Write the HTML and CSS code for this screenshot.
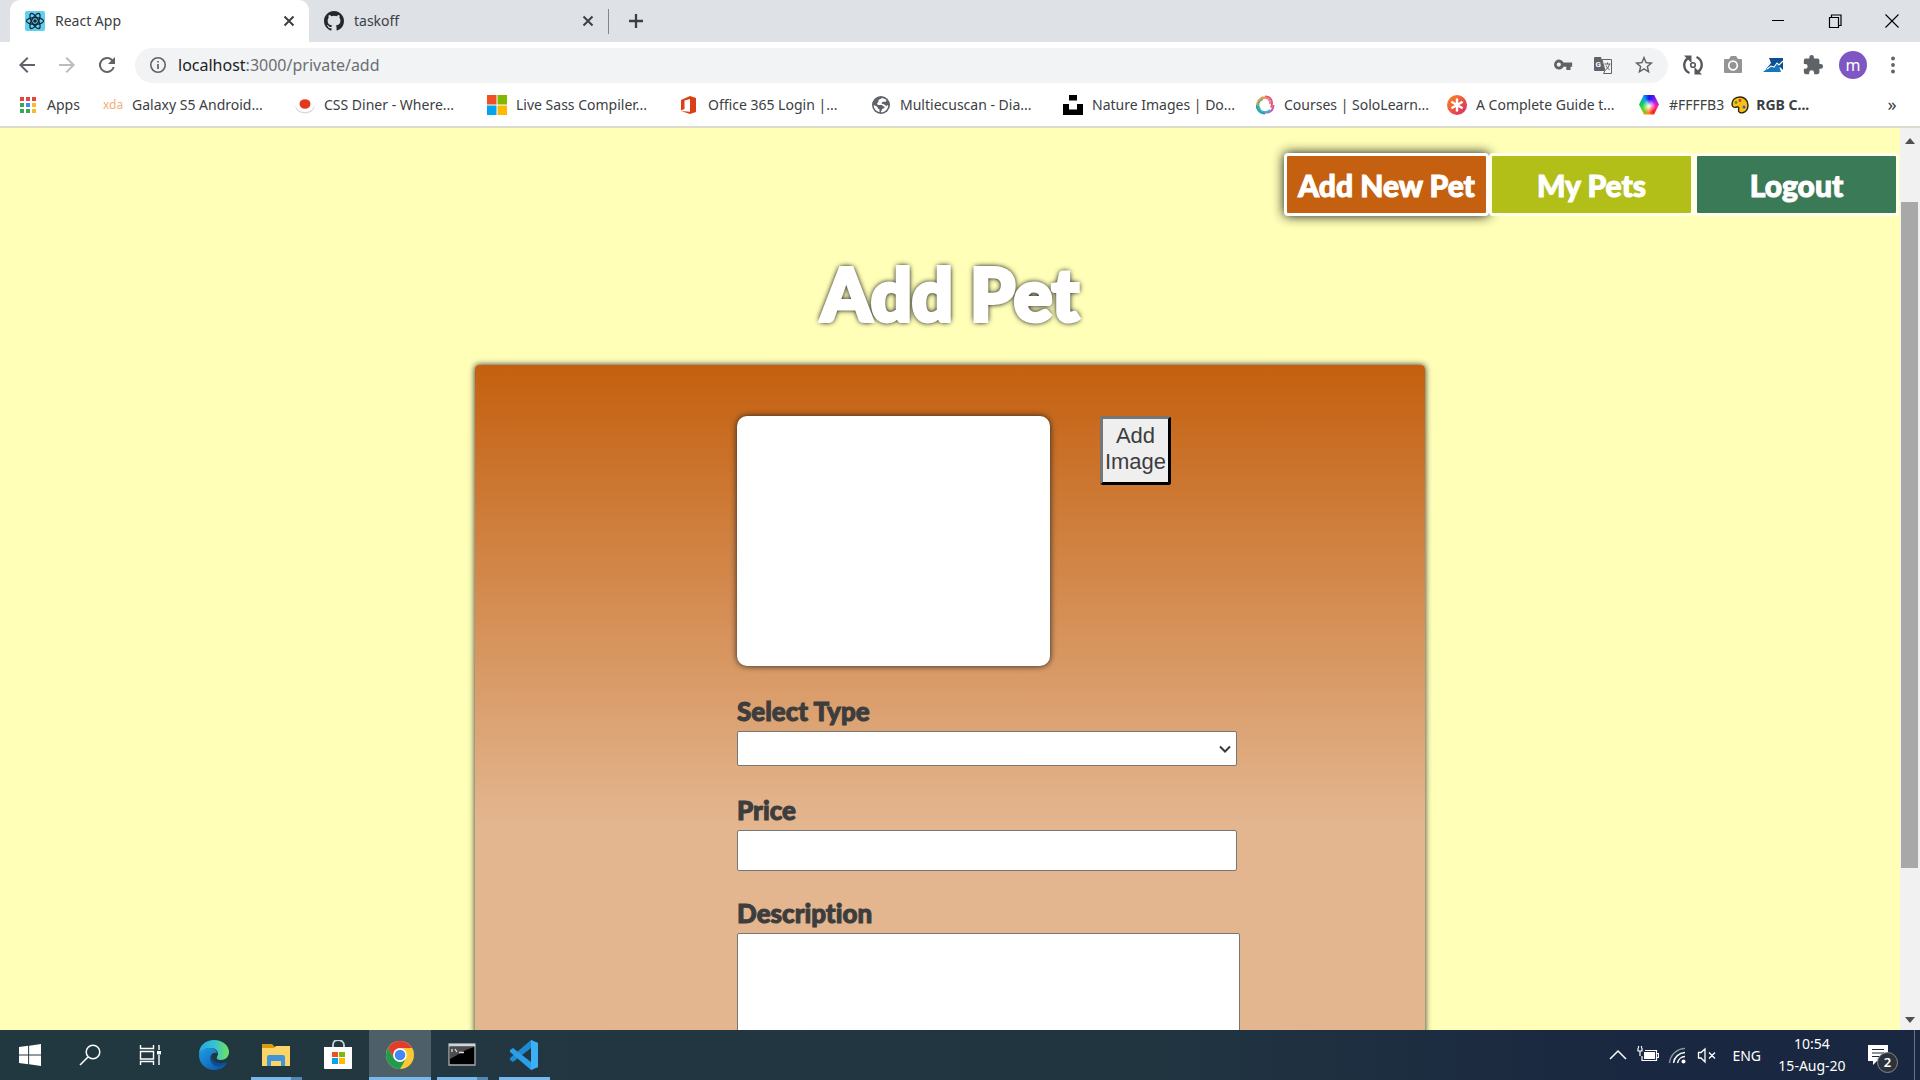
FILE: index.html
```html
<!DOCTYPE html>
<html lang="en">
<head>
<meta charset="utf-8">
<title>React App</title>
<link rel="stylesheet" href="styles.css">
</head>
<body>
<header class="browser">
  <div class="tabstrip">
    <div class="tab tab-active">
      <svg class="i20" viewBox="0 0 20 20"><rect width="20" height="20" rx="2" fill="#61d0ee"/><g fill="none" stroke="#123" stroke-width="1.2"><ellipse cx="10" cy="10" rx="8.5" ry="3.3"/><ellipse cx="10" cy="10" rx="8.5" ry="3.3" transform="rotate(60 10 10)"/><ellipse cx="10" cy="10" rx="8.5" ry="3.3" transform="rotate(120 10 10)"/></g><circle cx="10" cy="10" r="1.8" fill="#123"/></svg>
      <span class="tab-title">React App</span>
      <button class="plain" aria-label="Close tab"><svg class="i12" viewBox="0 0 12 12"><path d="M1.500 1.500l9 9M10.500 1.500l-9 9" stroke="#3c4043" stroke-width="2"/></svg></button>
    </div>
    <div class="tab">
      <svg class="i20" viewBox="0 0 16 16"><path fill="#24292e" d="M8 0C3.580 0 0 3.580 0 8c0 3.540 2.290 6.530 5.470 7.590.4.070.55-.17.55-.38v-1.490c-2.010.37-2.530-.49-2.690-.94-.09-.23-.48-.94-.82-1.130-.28-.15-.68-.52-.01-.53.63-.01 1.080.58 1.230.82.72 1.210 1.870.87 2.330.66.07-.52.28-.87.51-1.070-1.780-.2-3.640-.89-3.640-3.950 0-.87.31-1.590.82-2.150-.08-.2-.36-1.020.08-2.120 0 0 .67-.21 2.200.82a7.600 7.600 0 014 0c1.530-1.040 2.200-.82 2.200-.82.44 1.100.16 1.920.08 2.120.51.56.82 1.270.82 2.150 0 3.070-1.870 3.750-3.650 3.950.29.25.54.73.54 1.480v2.200c0 .21.15.46.55.38A8 8 0 0016 8c0-4.420-3.580-8-8-8z"/></svg>
      <span class="tab-title">taskoff</span>
      <button class="plain" aria-label="Close tab"><svg class="i12" viewBox="0 0 12 12"><path d="M1.500 1.500l9 9M10.500 1.500l-9 9" stroke="#3c4043" stroke-width="2"/></svg></button>
    </div>
    <span class="tab-divider"></span>
    <button class="plain new-tab" aria-label="New tab"><svg class="i16" viewBox="0 0 16 16"><path d="M8 1v14M1 8h14" stroke="#3c4043" stroke-width="2.300"/></svg></button>
    <div class="window-controls">
      <button class="plain" aria-label="Minimize"><svg class="i14" viewBox="0 0 14 14"><path d="M1 6.500h12" stroke="#000"/></svg></button>
      <button class="plain" aria-label="Restore"><svg class="i14" viewBox="0 0 14 14"><path d="M1.500 3.500h9v10h-9zM3.500 3V1h9.500v10.500h-2" fill="none" stroke="#000" stroke-width="1.200"/></svg></button>
      <button class="plain" aria-label="Close"><svg class="i14" viewBox="0 0 14 14"><path d="M.5.5l13 13M13.500.5l-13 13" stroke="#000" stroke-width="1.100"/></svg></button>
    </div>
  </div>
  <div class="toolbar">
    <div class="nav-icons">
      <button class="plain" aria-label="Back"><svg class="i24" viewBox="0 0 24 24"><path fill="#5f6368" d="M20 11H7.800l5.600-5.600L12 4l-8 8 8 8 1.400-1.400L7.800 13H20z"/></svg></button>
      <button class="plain" aria-label="Forward"><svg class="i24" viewBox="0 0 24 24"><path fill="#babcbe" d="M4 11h12.200l-5.600-5.600L12 4l8 8-8 8-1.400-1.400 5.600-5.600H4z"/></svg></button>
      <button class="plain" aria-label="Reload"><svg class="i24" viewBox="0 0 24 24"><path fill="#5f6368" d="M17.650 6.350A8 8 0 1 0 19.730 14h-2.080A6 6 0 1 1 12 6c1.660 0 3.140.69 4.220 1.780L13 11h7V4z"/></svg></button>
    </div>
    <label class="omnibox">
      <svg class="i20" viewBox="0 0 20 20"><circle cx="10" cy="10" r="7.200" fill="none" stroke="#5f6368" stroke-width="1.600"/><path d="M10 9v5M10 6v1.600" stroke="#5f6368" stroke-width="1.700"/></svg>
      <span class="url"><b>localhost</b>:3000/private/add</span>
      <svg class="i20" viewBox="0 0 24 24"><path fill="#5f6368" d="M12.650 9A6 6 0 1 0 12.650 14H16v4h5v-4h2V9zM7 14a2.500 2.500 0 1 1 0-5 2.500 2.500 0 0 1 0 5z"/></svg>
      <svg class="i20" viewBox="0 0 20 20"><path d="M2 2h6l4 14H2a1 1 0 0 1-1-1V3a1 1 0 0 1 1-1z" fill="#5f6368"/><path d="M9 4.500h9.500v14h-8l1.500-3z" fill="#f1f3f4" stroke="#5f6368"/><path d="M11.500 9h6M14.500 7.500V9m2 0c-.5 2.500-2 4.500-4 6m.5-4.500c1 2 2 3 3.500 4.500" stroke="#5f6368" fill="none"/><text x="2.500" y="11.500" font-size="8" font-weight="700" fill="#fff" font-family="Roboto, sans-serif">G</text></svg>
      <svg class="i22" viewBox="0 0 24 24"><path fill="#5f6368" d="M22 9.240l-7.190-.62L12 2 9.190 8.630 2 9.240l5.460 4.730L5.820 21 12 17.270 18.180 21l-1.630-7.030zM12 15.400l-3.760 2.270 1-4.280-3.320-2.880 4.380-.38L12 6.100l1.710 4.040 4.380.38-3.320 2.880 1 4.280z"/></svg>
    </label>
    <div class="extensions">
      <svg class="i22" viewBox="0 0 22 22"><g fill="none" stroke="#55585c" stroke-width="2.400"><path d="M7.500 19A8.500 8.500 0 0 1 5.500 4.500"/><path d="M14.500 3a8.500 8.500 0 0 1 2 14.500"/></g><path d="M2 1.500h7.500V9zM20 20.500h-7.500V13z" fill="#55585c"/><circle cx="11" cy="11" r="2.300" fill="none" stroke="#55585c" stroke-width="1.600"/></svg>
      <svg class="i22" viewBox="0 0 22 22"><path fill="#949494" d="M3 5h4l2-3h5l2 3h3a1 1 0 0 1 1 1v12a1 1 0 0 1-1 1H3a1 1 0 0 1-1-1V6a1 1 0 0 1 1-1z"/><circle cx="11" cy="11.500" r="4.300" fill="none" stroke="#fff" stroke-width="1.700"/></svg>
      <svg class="i22" viewBox="0 0 22 22"><path fill="#0b4f8c" d="M7 4h14v12l-3-3-5 3-9-1 5-6z"/><path fill="#1576bd" d="M1 18l5-4 3-2 3 2 3-4 2 2 2 6z"/><path d="M5 15l4-3 3 1 3-4 2 2 4-4" fill="none" stroke="#fff" stroke-width="1.100"/></svg>
      <svg class="i22" viewBox="0 0 24 24"><path fill="#5f6368" d="M20.500 11H19V7a2 2 0 0 0-2-2h-4V3.500a2.500 2.500 0 0 0-5 0V5H4a2 2 0 0 0-2 2v3.800h1.500a2.700 2.700 0 0 1 0 5.400H2V20a2 2 0 0 0 2 2h3.800v-1.500a2.700 2.700 0 0 1 5.400 0V22H17a2 2 0 0 0 2-2v-4h1.500a2.500 2.500 0 0 0 0-5z"/></svg>
      <button class="plain avatar">m</button>
      <svg class="i22" viewBox="0 0 22 22"><g fill="#5f6368"><circle cx="11" cy="4.500" r="1.900"/><circle cx="11" cy="11" r="1.900"/><circle cx="11" cy="17.500" r="1.900"/></g></svg>
    </div>
  </div>
  <nav class="bookmarks">
    <a href="#" class="bm-apps"><svg class="i20" viewBox="0 0 20 20"><path fill="#e8453c" d="M2 2h4v4H2zM8 2h4v4H8zM14 2h4v4h-4z"/><path fill="#3aa757" d="M2 8h4v4H2zM2 14h4v4H2z"/><path fill="#4688f1" d="M8 8h4v4H8z"/><path fill="#f9bb2d" d="M14 8h4v4h-4zM14 14h4v4h-4z"/><path fill="#3aa757" d="M8 14h4v4H8z"/></svg>Apps</a>
    <a href="#"><span class="xda">xda</span>Galaxy S5 Android...</a>
    <a href="#"><svg class="i20" viewBox="0 0 20 20"><ellipse cx="10" cy="12" rx="9.500" ry="6.500" fill="#dcdcdc"/><ellipse cx="10" cy="10.500" rx="9" ry="6.500" fill="#fff"/><ellipse cx="10" cy="9" rx="5.500" ry="4.800" fill="#e03a1c"/></svg>CSS Diner - Where...</a>
    <a href="#"><svg class="i20" viewBox="0 0 20 20"><path fill="#f25022" d="M0 0h9.500v9.500H0z"/><path fill="#7fba00" d="M10.500 0H20v9.500h-9.500z"/><path fill="#00a4ef" d="M0 10.500h9.500V20H0z"/><path fill="#ffb900" d="M10.500 10.500H20V20h-9.500z"/></svg>Live Sass Compiler...</a>
    <a href="#"><svg class="i20" viewBox="0 0 20 20"><path fill="#dc3e15" d="M2 5l9-4 6 2v14l-6 2-9-3 9 .8V4L5.500 5.500v8.500L2 15.500z"/></svg>Office 365 Login |...</a>
    <a href="#"><svg class="i20" viewBox="0 0 20 20"><circle cx="10" cy="10" r="9" fill="#5f6368"/><path fill="#fff" d="M11 3c-1 1-4 1.500-3.500 3S5 8 6.500 9.500s4-.5 5 1 2.500.5 2 2-2 .5-2.500 2S9.500 17 10 17.300c4 0 7-3 7.200-6.800-1-.5-1 .5-2.200.2S13.500 9 12 9s-2-1-.5-2 2.500.5 3.500-.5l.5-1.500C14 4 12.500 3.200 11 3z"/><path fill="#fff" d="M2.700 10l3.300 1.500 1 2 1.500 1V17C5 16.300 2.700 13.500 2.700 10z"/></svg>Multiecuscan - Dia...</a>
    <a href="#"><svg class="i20" viewBox="0 0 20 20"><path d="M6 0h8v5.500H6zM0 9h6v5.500h8V9h6v11H0z"/></svg>Nature Images | Do...</a>
    <a href="#"><svg class="i20" viewBox="0 0 20 20"><g fill="none" stroke-width="1.900"><path d="M10 1.500c5 0 9 4 6 11" stroke="#e8566d"/><path d="M6 3c5-2 10 2 9 6" stroke="#f0839a"/><path d="M18.500 10c0 6-5 9-10 7" stroke="#c95ba0"/><path d="M15 15c-4 4-10 2-11-2" stroke="#3fb0de"/><path d="M10 18.500c-6 0-9-5-8-9" stroke="#2b9fb0"/><path d="M5 14c-3-3-2-9 3-10" stroke="#5cb27c"/><path d="M2 9c1-5 5-7 9-6" stroke="#e69a4c"/></g></svg>Courses | SoloLearn...</a>
    <a href="#"><svg class="i20" viewBox="0 0 20 20"><defs><linearGradient id="ast" x2="1" y2="1"><stop stop-color="#ff8a18"/><stop offset="1" stop-color="#d6246e"/></linearGradient></defs><circle cx="10" cy="10" r="10" fill="url(#ast)"/><path d="M10 3.500v13M4.400 6.800l11.200 6.400M15.600 6.800L4.400 13.200" stroke="#fff" stroke-width="2.400"/></svg>A Complete Guide t...</a>
    <a href="#"><span class="hexagon"></span>#FFFFB3 <svg class="i18" viewBox="0 0 18 18"><path d="M9 1C3 1 1 5 1 8c0 3 2 4 5 3 2-.5 2 1 1.500 3s2 3.500 5 2.500 4.500-4 4.500-7.500C17 4 13 1 9 1z" fill="#fbbf16" stroke="#2b2207" stroke-width="1.400"/><circle cx="5" cy="6.500" r="1.400" fill="#3f9e3f"/><circle cx="9" cy="4.500" r="1.400" fill="#d8342b"/><circle cx="13" cy="11" r="1.500" fill="#3b5fae"/></svg> <b>RGB C...</b></a>
    <button class="plain more" aria-label="More bookmarks">»</button>
  </nav>
</header>

<div class="viewport">
  <main class="page">
    <nav class="site-nav">
      <a href="#" class="nav-link nav-add">Add New Pet</a>
      <a href="#" class="nav-link nav-pets">My Pets</a>
      <a href="#" class="nav-link nav-logout">Logout</a>
    </nav>
    <h1>Add Pet</h1>
    <form class="card">
      <div class="image-row">
        <div class="preview"></div>
        <button type="button" class="add-image">Add Image</button>
      </div>
      <label for="type">Select Type</label>
      <div class="select-wrap">
        <select id="type"><option></option></select>
        <svg class="chevron" viewBox="0 0 12 8"><path d="M1 1.500l5 5 5-5" fill="none" stroke="#3a3a3a" stroke-width="2"/></svg>
      </div>
      <label for="price">Price</label>
      <input id="price" type="text">
      <label for="description">Description</label>
      <textarea id="description"></textarea>
    </form>
  </main>
  <div class="scrollbar">
    <svg viewBox="0 0 10 6"><path d="M0 6l5-6 5 6z" fill="#505050"/></svg>
    <div class="track"><div class="thumb"></div></div>
    <svg viewBox="0 0 10 6"><path d="M0 0l5 6 5-6z" fill="#505050"/></svg>
  </div>
</div>

<footer class="taskbar">
  <button class="plain sys" aria-label="Start"><svg class="i22" viewBox="0 0 20 20"><path fill="#fff" d="M0 2.800l8.300-1.200v7.900H0zM9.200 1.500L20 0v9.500H9.200zM0 10.400h8.300v7.900L0 17.200zM9.200 10.400H20V20L9.200 18.500z"/></svg></button>
  <button class="plain sys" aria-label="Search"><svg class="i22" viewBox="0 0 22 22"><circle cx="14" cy="8" r="6.800" fill="none" stroke="#fff" stroke-width="1.500"/><path d="M9 13l-8 8" stroke="#fff" stroke-width="1.600"/></svg></button>
  <button class="plain sys" aria-label="Task view"><svg class="i22" viewBox="0 0 22 22"><g fill="none" stroke="#fff" stroke-width="1.400"><path d="M1.500 1v3.500h13V1M1.500 21v-3.500h13V21M1.500 7.500h13v7.500h-13zM20 1v5M20 11v10"/></g><path d="M18 7h4v3.500h-4z" fill="#fff"/></svg></button>
  <button class="plain app first-app" aria-label="Edge"><svg class="i30" viewBox="0 0 30 30"><defs><linearGradient id="eg" x2="1"><stop stop-color="#2aa5e0"/><stop offset=".5" stop-color="#35c1d6"/><stop offset="1" stop-color="#6fe45a"/></linearGradient><linearGradient id="eb" x2="1" y2="1"><stop stop-color="#1fa0e4"/><stop offset="1" stop-color="#0c4fa5"/></linearGradient></defs><path fill="url(#eg)" d="M0 14C0 5 7 0 15 0c9 0 15 6 15 12 0 5-4 8-8 8-3 0-5-1-4-3 3-5-1-9-6-9C6 8 2 11 0 14z"/><path fill="url(#eb)" d="M0 15C1 10 6 8 11 8c4 0 7 2 7 5-5-1-7 3-6 7 2 6 9 7 16 3-3 5-8 7-13 7C6 30 0 23 0 15z"/><path fill="#0f4c96" d="M12 15c-3 6 3 14 11 11 2-1 4-2 5-4-7 3-16 0-16-7z"/></svg></button>
  <button class="plain app open grouped" aria-label="File Explorer"><svg class="i28" viewBox="0 0 28 28"><path fill="#d99a12" d="M0 3h10l3 3h2v6H0z"/><path fill="#fbd468" d="M0 7h12l2-2h14v20H0z"/><path fill="#3f95d8" d="M5 25V16a2 2 0 0 1 2-2h14a2 2 0 0 1 2 2v9h-4v-5H9v5z"/></svg></button>
  <button class="plain app" aria-label="Microsoft Store"><svg class="i30" viewBox="0 0 30 30"><path d="M10 8V5c0-3 2-5 5-5s6 2 6 5v3" fill="none" stroke="#ccd6da" stroke-width="1.800"/><path fill="#fff" d="M1 7h28v21a1 1 0 0 1-1 1H2a1 1 0 0 1-1-1z"/><path fill="#f25022" d="M9 12h6v5H9z"/><path fill="#7fba00" d="M16 12h6v5h-6z"/><path fill="#00a4ef" d="M9 18h6v6H9z"/><path fill="#ffb900" d="M16 18h6v6h-6z"/></svg></button>
  <button class="plain app active" aria-label="Chrome"><svg class="i28" viewBox="0 0 28 28"><circle cx="14" cy="14" r="14" fill="#fcc934"/><path fill="#e33b2e" d="M1.900 7A14 14 0 0 1 26.100 7H14a7 7 0 0 0-6 10.500z"/><path fill="#1e9b4f" d="M1.900 7A14 14 0 0 0 14 28l6.100-10.500A7 7 0 0 1 8 17.500z"/><circle cx="14" cy="14" r="6.800" fill="#fff"/><circle cx="14" cy="14" r="5.300" fill="#4486f4"/></svg></button>
  <button class="plain app open grouped" aria-label="Command Prompt"><svg class="i28" viewBox="0 0 28 28"><path fill="#000" stroke="#a8afb2" stroke-width="1.300" d="M1 3h26v21H1z"/><path fill="#d0d4d6" d="M1 3h26v2.500H1z"/><path fill="#4c4c4c" d="M2 6h24l-8 3C12 12 8 15 2 18z"/><path d="M4 8v3M7 8l2 3M11 11.500h5" stroke="#ddd" stroke-width="1.300"/></svg></button>
  <button class="plain app open" aria-label="Visual Studio Code"><svg class="i30" viewBox="0 0 30 30"><path fill="#1f8ad2" d="M22 0l7 3v24l-7 3V8L4 22l-3-2v-2z"/><path fill="#2a9fe8" d="M1 10l3-2 18 14v8L1 12z"/><path fill="#3cb0f5" d="M22 0l7 3v24l-7 3z"/></svg></button>
  <div class="tray">
    <svg class="i20" viewBox="0 0 20 20"><path d="M2 14l8-8 8 8" fill="none" stroke="#fff" stroke-width="1.500"/></svg>
    <svg class="i22" viewBox="0 0 22 22"><path fill="#fff" d="M7 8h11v7H7z"/><path d="M5 12v4.500h14.500v-10H8M20 9.500h1.500v4H20M1 4v3h4V4M3 7v5M1.500 2v2M4.500 2v2" fill="none" stroke="#fff" stroke-width="1.200"/></svg>
    <svg class="i20" viewBox="0 0 20 20"><g fill="none" stroke="#fff" stroke-width="1.400"><path d="M1.500 18A16 16 0 0 1 17 3.500" opacity=".5"/><path d="M5.500 18A12 12 0 0 1 17 7.500M9.500 18A8 8 0 0 1 17 11.500"/></g><circle cx="15.500" cy="16.500" r="2" fill="#fff"/></svg>
    <svg class="i20" viewBox="0 0 20 20"><path d="M1.500 7.500H4L8 4v13l-4-4H1.500zM12 7.500l6 6M18 7.500l-6 6" fill="none" stroke="#fff" stroke-width="1.300"/></svg>
    <span class="lang">ENG</span>
    <div class="clock"><span>10:54</span><span>15-Aug-20</span></div>
    <div class="notify"><svg class="i20" viewBox="0 0 20 20"><path fill="#fff" d="M0 0h20v16H9l-4 4v-4H0z"/><path d="M4 4.500h12M4 8h12M4 11.500h9" stroke="#1a2740" stroke-width="1.200"/></svg><span class="badge">2</span></div>
  </div>
</footer>
</body>
</html>
```
FILE: styles.css
```css
* { box-sizing: border-box; }
body {
  margin: 0;
  height: 100vh;
  display: flex;
  flex-direction: column;
  overflow: hidden;
  font-family: "Noto Sans", "Open Sans", sans-serif;
  font-size: 14px;
  color: #3c4043;
}
svg { flex: none; display: block; }
a { color: inherit; text-decoration: none; }
.plain { border: 0; padding: 0; background: none; font: inherit; color: inherit; display: flex; align-items: center; justify-content: center; flex: none; }
.i12 { width: 12px; height: 12px; }
.i14 { width: 14px; height: 14px; }
.i16 { width: 16px; height: 16px; }
.i18 { width: 18px; height: 18px; }
.i20 { width: 20px; height: 20px; }
.i22 { width: 22px; height: 22px; }
.i24 { width: 24px; height: 24px; }
.i28 { width: 28px; height: 28px; }
.i30 { width: 30px; height: 30px; }

/* Browser window */
.browser { flex: none; background: #fff; border-bottom: 2px solid #dcdccb; }
.tabstrip { display: flex; align-items: center; height: 42px; padding-left: 10px; background: #dee1e6; }
.tab { display: flex; align-items: center; gap: 10px; width: 299px; height: 42px; padding: 0 14px 0 15px; }
.tab-active { background: #fff; border-radius: 10px 10px 0 0; }
.tab-title { flex: 1; padding-bottom: 2px; }
.tab-divider { width: 1px; height: 25px; background: #80868b; }
.new-tab { width: 54px; }
.window-controls { display: flex; margin-left: auto; height: 36px; }
.window-controls button { width: 57px; }
.toolbar { display: flex; align-items: center; height: 45px; gap: 14px; padding: 0 16px 0 15px; }
.nav-icons { display: flex; gap: 16px; width: 106px; }
.omnibox { flex: 1; display: flex; align-items: center; gap: 20px; height: 35px; margin-top: 1px; padding: 0 13px; border-radius: 18px; background: #f1f3f4; }
.url { flex: 1; margin-left: -10px; font-size: 16px; color: #6b6f73; }
.url b { font-weight: 400; color: #202124; }
.extensions { display: flex; align-items: center; gap: 18px; }
.avatar { width: 28px; height: 28px; margin: 0 -3px; border-radius: 50%; background: #7e57c2; color: #fff; font-size: 16px; }
.bookmarks { display: flex; align-items: center; height: 39px; padding: 0 18px 4px; }
.bookmarks a { display: flex; align-items: center; gap: 9px; width: 192px; white-space: nowrap; }
.bookmarks .bm-apps { width: 85px; }
.bookmarks a:nth-last-of-type(1) { gap: 7px; }
.xda { width: 20px; font-size: 12px; color: #f2ae76; }
.hexagon { width: 20px; height: 20px; margin-right: 3px; background: radial-gradient(circle at 50% 55%, #fff, transparent 45%), conic-gradient(#1616f0, #a020f0 60deg, #ff20a0 100deg, #f02020 150deg, #ff8c20 185deg, #50e020 235deg, #10c850 280deg, #10a0f0 325deg, #1616f0); clip-path: polygon(25% 0, 75% 0, 100% 50%, 75% 100%, 25% 100%, 0 50%); }
.more { margin-left: auto; width: 20px; font-size: 18px; padding-bottom: 2px; }

/* Web page */
.viewport { flex: 1; min-height: 0; display: flex; }
.page { flex: 1; overflow: hidden; background: #ffffb8; font-family: "Lato", sans-serif; font-variant-ligatures: none; }
.site-nav { display: flex; justify-content: flex-end; padding: 25px 1px 0 0; }
.nav-link { display: flex; align-items: center; justify-content: center; width: 205px; height: 63px; border: 3px solid #ffffec; border-radius: 4px; color: #fff; font-size: 30px; white-space: nowrap; font-weight: 900; -webkit-text-stroke: 1px #fff; }
.nav-add { background: #c4600f; border-color: #fff; box-shadow: 0 0 12px #111; }
.nav-pets { background: #b1bf18; }
.nav-logout { background: #3b7a57; }
h1 { margin: 27px 0 22px; line-height: 100px; text-align: center; font-size: 72px; font-weight: 900; color: #fff; -webkit-text-stroke: 4px #fff; text-shadow: 0 0 6px #222, 0 0 6px #222, 0 0 4px #222; }
.card { display: flex; flex-direction: column; align-items: flex-start; width: 50%; min-height: 915px; margin: 0 auto; padding: 51px 0 0 262px; background: linear-gradient(#c4600f, #e3b690 460px); border-radius: 4px; box-shadow: 0 0 6px #223; }
.image-row { display: flex; align-items: flex-start; gap: 50px; margin-bottom: 25px; }
.preview { width: 313px; height: 250px; border-radius: 10px; background: #fff; box-shadow: 0 0 6px #222; }
.add-image { width: 71px; height: 69px; padding: 0 0 3px; border: 3px outset #222; border-color: #767676 #1c1c1c #1c1c1c #767676; border-radius: 3px; background: #efefef; color: #3d3d3d; font: 22px/26px "Liberation Sans", sans-serif; }
.card label { height: 40px; line-height: 40px; font-size: 26px; font-weight: 900; color: #3d3d3d; -webkit-text-stroke: 1px #3d3d3d; }
.card input, .card select, .card textarea { display: block; border: 1px solid #767676; border-radius: 2px; background: #fff; padding: 2px 4px; font-size: 20px; }
.select-wrap { position: relative; margin-bottom: 24px; }
.card select { width: 500px; height: 35px; appearance: none; }
.chevron { position: absolute; right: 6px; top: 14px; width: 12px; height: 8px; }
.card input { width: 500px; height: 41px; margin-bottom: 22px; }
.card textarea { width: 503px; height: 220px; resize: none; }
.scrollbar { flex: none; width: 20px; padding: 10px 2px 7px 1px; display: flex; flex-direction: column; align-items: center; background: #f1f1f1; }
.scrollbar svg { width: 10px; height: 6px; }
.track { flex: 1; width: 100%; padding: 58px 0 149px; display: flex; }
.thumb { flex: 1; background: #a8a8a8; }

/* Desktop taskbar */
.taskbar { flex: none; display: flex; height: 50px; background: linear-gradient(90deg, #223840, #213541 60%, #1a2740 85%); color: #fff; }
.sys { width: 60px; }
.app { width: 62px; border-bottom: 3px solid transparent; padding-top: 3px; }
.first-app { margin-left: 3px; }
.open { background: linear-gradient(#76b9ed, #76b9ed) center bottom / 51px 3px no-repeat border-box; }
.grouped { background: linear-gradient(90deg, #76b9ed 40px, #5488b4 40px) center bottom / 51px 3px no-repeat border-box; }
.active { background: #4d606a; border-bottom-color: #76b9ed; }
.tray { display: flex; align-items: center; margin: 0 5px 0 auto; padding-right: 16px; gap: 9px; border-right: 1px solid #6a7484; }
.lang { margin-left: 6px; }
.clock { display: flex; flex-direction: column; align-items: center; width: 84px; line-height: 22px; }
.notify { position: relative; margin-left: 5px; width: 30px; }
.badge { position: absolute; left: 9px; top: 7px; width: 21px; height: 21px; border: 1px solid #888; border-radius: 50%; background: #2d333c; font-size: 13px; line-height: 19px; font-weight: 600; text-align: center; }
```
